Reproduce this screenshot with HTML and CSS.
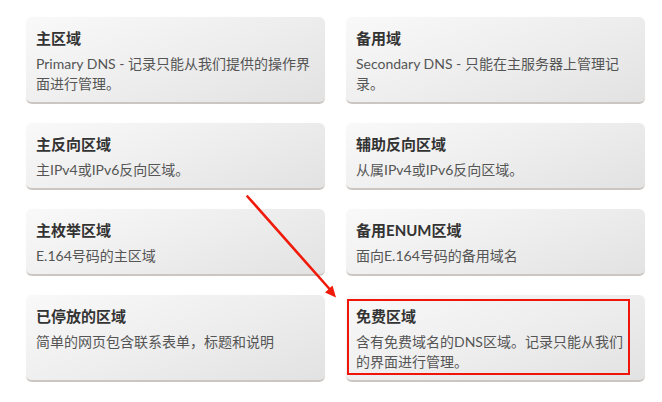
FILE: index.html
```html
<!DOCTYPE html>
<html lang="zh">
<head>
<meta charset="utf-8">
<title>区域类型</title>
<link rel="stylesheet" href="styles.css">
</head>
<body>
<div class="page">
  <div class="grid">
    <div class="card">
      <div class="title">主区域</div>
      <div class="desc">Primary DNS - 记录只能从我们提供的操作界面进行管理。</div>
    </div>
    <div class="card">
      <div class="title">备用域</div>
      <div class="desc">Secondary DNS - 只能在主服务器上管理记录。</div>
    </div>
    <div class="card">
      <div class="title">主反向区域</div>
      <div class="desc">主IPv4或IPv6反向区域。</div>
    </div>
    <div class="card">
      <div class="title">辅助反向区域</div>
      <div class="desc">从属IPv4或IPv6反向区域。</div>
    </div>
    <div class="card">
      <div class="title">主枚举区域</div>
      <div class="desc">E.164号码的主区域</div>
    </div>
    <div class="card">
      <div class="title">备用ENUM区域</div>
      <div class="desc">面向E.164号码的备用域名</div>
    </div>
    <div class="card">
      <div class="title">已停放的区域</div>
      <div class="desc">简单的网页包含联系表单，标题和说明</div>
    </div>
    <div class="card">
      <div class="title">免费区域</div>
      <div class="desc">含有免费域名的DNS区域。记录只能从我们的界面进行管理。</div>
      <div class="highlight"></div>
    </div>
  </div>
  <svg class="arrow" width="662" height="402" viewBox="0 0 662 402">
    <line x1="247.5" y1="196.5" x2="330" y2="289.5" stroke="#f01a0a" stroke-width="2.6" stroke-linecap="round"/>
    <polygon points="336,297.5 325,292.5 332.5,285.5" fill="#f01a0a"/>
  </svg>
</div>
</body>
</html>
```

FILE: styles.css
```css
html, body {
  margin: 0;
  padding: 0;
  background: #ffffff;
}

.page {
  position: relative;
  width: 662px;
  height: 402px;
  padding: 17px 0 0 26px;
  box-sizing: border-box;
  font-family: Lato, "Noto Sans CJK SC", sans-serif;
}

.grid {
  display: grid;
  grid-template-columns: 299px 299px;
  column-gap: 21px;
  row-gap: 19px;
}

.card {
  position: relative;
  padding: 11px 11px 8px 10px;
  border-radius: 6px;
  background: linear-gradient(160deg, #f9f9f9 0%, #eeeeee 50%, #e2e2e2 100%);
  border-bottom: 2px solid #cbc6c2;
  box-shadow: 0 0 1px rgba(0, 0, 0, 0.06);
}

.title {
  font-size: 15px;
  line-height: 20px;
  font-weight: 700;
  color: #333333;
  margin-bottom: 6px;
}

.desc {
  font-size: 14px;
  line-height: 20px;
  color: #555555;
}

.highlight {
  position: absolute;
  left: 1px;
  top: 4px;
  width: 283px;
  height: 76px;
  box-sizing: border-box;
  border: 2px solid #f0140a;
}

.arrow {
  position: absolute;
  left: 0;
  top: 0;
  pointer-events: none;
}
```
